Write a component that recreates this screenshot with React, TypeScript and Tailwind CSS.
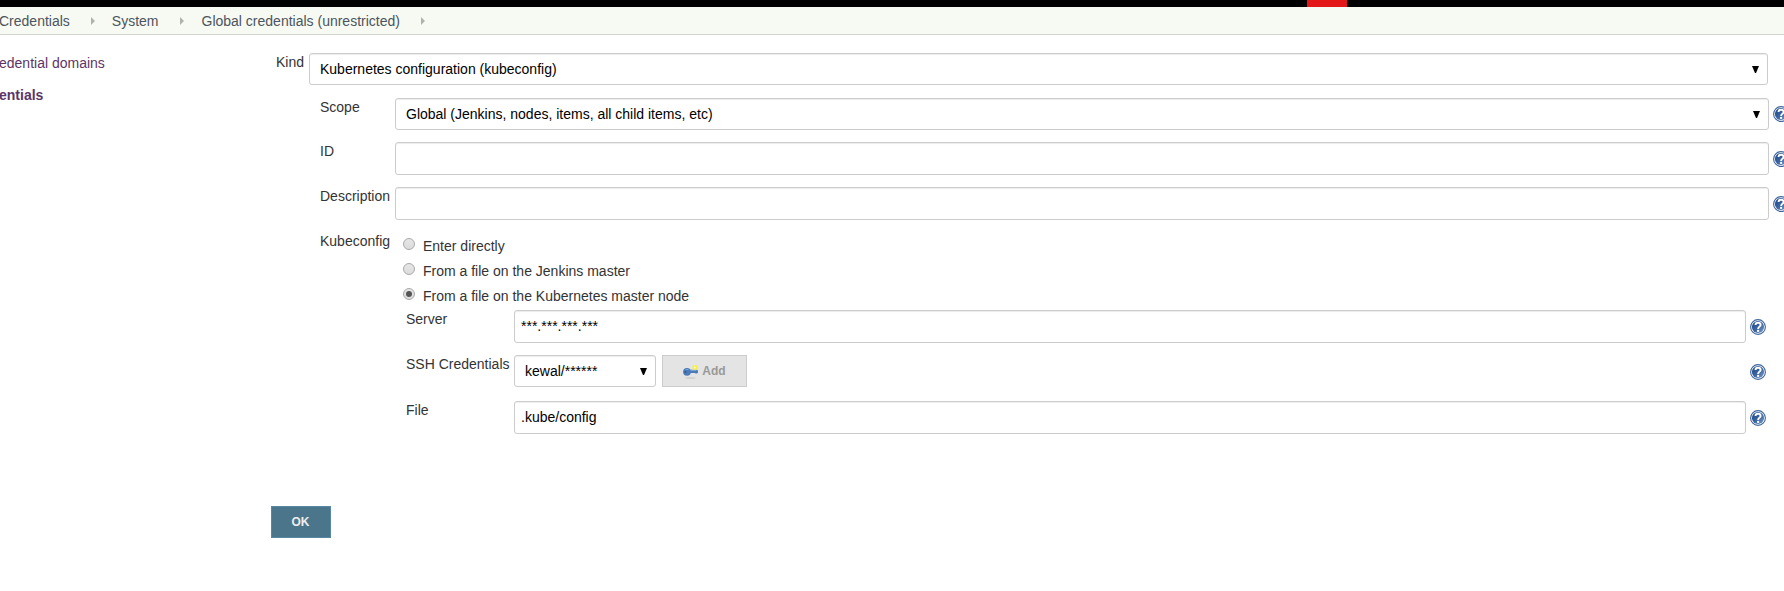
import type { ReactNode } from "react";

function HelpIcon() {
  return (
    <svg width="16" height="16" viewBox="0 0 16 16" className="block shrink-0" aria-label="Help">
      <defs>
        <linearGradient id="helpFill" x1="0" y1="0" x2="1" y2="1">
          <stop offset="0" stopColor="#1c4587" />
          <stop offset="0.5" stopColor="#3a64a0" />
          <stop offset="1" stopColor="#7d9cc6" />
        </linearGradient>
      </defs>
      <circle cx="8" cy="8" r="7.4" fill="#fff" stroke="#3c649c" strokeWidth="1.1" />
      <circle cx="8" cy="8" r="6.1" fill="url(#helpFill)" />
      <path d="M5.5 5.9C5.5 3 10.6 3 10.6 5.9C10.6 7.6 8.1 7.7 8.1 9.9" fill="none" stroke="#fff" strokeWidth="1.9" />
      <rect x="7.1" y="10.9" width="2" height="2" fill="#fff" />
    </svg>
  );
}

function KeyIcon() {
  return (
    <svg width="16" height="16" viewBox="0 0 16 16" className="block shrink-0">
      <ellipse cx="7.5" cy="15" rx="5.5" ry="0.7" fill="#cacaca" />
      <ellipse cx="4" cy="8.8" rx="3.9" ry="3.9" fill="#4a7ab8" />
      <path d="M6.5 6.8H14L15 7.8V9.4L14 10.4H12.6L11.8 10H7Z" fill="#4a7ab8" />
      <path d="M2.5 6.5H5.5M7.5 7.5H13.4" stroke="#7fa6d6" strokeWidth="0.9" />
      <circle cx="2.5" cy="8.9" r="0.9" fill="#2c548c" />
      <rect x="9.6" y="2.2" width="4.6" height="4.6" rx="1.4" fill="#f7f03c" />
      <circle cx="11.9" cy="4.5" r="1" fill="#fffcc0" />
    </svg>
  );
}

function Caret() {
  return (
    <svg width="7" height="7" viewBox="0 0 7 7" className="block shrink-0">
      <path d="M0 0H7L4 7H3Z" fill="#000" />
    </svg>
  );
}

function Crumb({ children, arrow }: { children: ReactNode; arrow: string }) {
  return (
    <>
      <span>{children}</span>
      <svg width="4" height="8" viewBox="0 0 4 8" className={`mt-px block shrink-0 ${arrow}`}>
        <path d="M0 0L4 4L0 8Z" fill="#b0b3ad" />
      </svg>
    </>
  );
}

function Select({ children, className = "" }: { children: ReactNode; className?: string }) {
  return (
    <div className={`flex h-8 items-center justify-between rounded-[3px] border border-[#ccc] bg-white pr-[8px] pl-[10px] text-black shadow-[inset_0_1px_1px_rgba(0,0,0,0.075)] ${className}`}>
      <span>{children}</span>
      <Caret />
    </div>
  );
}

function Field({ children }: { children?: ReactNode }) {
  return (
    <div className="flex h-[33px] flex-1 items-center rounded-[3px] border border-[#ccc] bg-white px-[6px] pb-px text-black shadow-[inset_0_1px_1px_rgba(0,0,0,0.075)]">
      {children}
    </div>
  );
}

function Row({ label, labelClass, children, className = "" }: { label: string; labelClass: string; children: ReactNode; className?: string }) {
  return (
    <div className={`flex items-start ${className}`}>
      <div className={`shrink-0 pt-px ${labelClass}`}>{label}</div>
      {children}
    </div>
  );
}

function Radio({ label, checked = false }: { label: string; checked?: boolean }) {
  return (
    <div className="flex h-[25px] items-start">
      <span className="mt-[4px] flex size-3 items-center justify-center rounded-full border border-[#a9a9a9] bg-linear-to-b from-[#e6e6e6] to-[#dcdcdc]">
        {checked && <span className="size-[6px] rounded-full bg-[#555]" />}
      </span>
      <span className="ml-2 pt-[4px]">{label}</span>
    </div>
  );
}

export default function App() {
  return (
    <div className="flex h-[591px] w-[1784px] flex-col overflow-hidden bg-white font-['Liberation_Sans',Arial,sans-serif] text-[14px] leading-4 text-[#333]">
      <header className="flex h-[7px] shrink-0 bg-black pl-[1307px]">
        <div className="w-10 bg-[#e31717]" />
      </header>
      <nav className="flex h-7 shrink-0 items-center border-b border-[#d3d7cf] bg-[#f6faf2] text-[#4d545d]">
        <Crumb arrow="ml-[21px] mr-[17px]">
          <span className="-ml-px">Credentials</span>
        </Crumb>
        <Crumb arrow="ml-[21px] mr-[18px]">System</Crumb>
        <Crumb arrow="ml-[21px]">Global credentials (unrestricted)</Crumb>
      </nav>
      <div className="flex flex-1 pt-[18px]">
        <aside className="-ml-px flex w-[272px] shrink-0 flex-col gap-4 pt-[2px] text-[#5c3566]">
          <a>edential domains</a>
          <a className="font-bold">entials</a>
        </aside>
        <main className="flex w-[1513px] flex-col">
          <Row label="Kind" labelClass="w-[38px] pl-[5px]">
            <Select className="w-[1459px]">Kubernetes configuration (kubeconfig)</Select>
          </Row>
          <div className="mt-[13px] flex flex-col pl-[49px]">
            <Row label="Scope" labelClass="w-[75px]" className="h-11">
              <Select className="flex-1">Global (Jenkins, nodes, items, all child items, etc)</Select>
              <div className="mt-2 ml-1 w-[11px] overflow-hidden"><HelpIcon /></div>
            </Row>
            <Row label="ID" labelClass="w-[75px]" className="h-[45px]">
              <Field />
              <div className="mt-[9px] ml-1 w-[11px] overflow-hidden"><HelpIcon /></div>
            </Row>
            <Row label="Description" labelClass="w-[75px]" className="h-[45px]">
              <Field />
              <div className="mt-[9px] ml-1 w-[11px] overflow-hidden"><HelpIcon /></div>
            </Row>
            <Row label="Kubeconfig" labelClass="w-[83px]">
              <div className="flex h-[78px] flex-col pt-[2px]">
                <Radio label="Enter directly" />
                <Radio label="From a file on the Jenkins master" />
                <Radio label="From a file on the Kubernetes master node" checked />
              </div>
            </Row>
            <div className="flex flex-col pr-[18px] pl-[86px]">
              <Row label="Server" labelClass="w-[108px]" className="h-[45px]">
                <Field>***.***.***.***</Field>
                <div className="mt-[9px] ml-1"><HelpIcon /></div>
              </Row>
              <Row label="SSH Credentials" labelClass="w-[108px]" className="h-[46px]">
                <Select className="w-[142px]">kewal/******</Select>
                <button className="ml-[6px] flex h-8 w-[85px] items-center justify-center gap-[3px] border border-[#ccc] bg-[#e4e4e4] text-[12px] font-bold text-[#999]">
                  <KeyIcon />
                  Add
                </button>
                <div className="mt-[9px] ml-auto"><HelpIcon /></div>
              </Row>
              <Row label="File" labelClass="w-[108px]">
                <Field>.kube/config</Field>
                <div className="mt-[9px] ml-1"><HelpIcon /></div>
              </Row>
            </div>
          </div>
          <button className="mt-[72px] h-8 w-[60px] border border-[#5788a1] bg-[#4b758b] pr-px text-[12px] font-bold text-[#eee]">
            OK
          </button>
        </main>
      </div>
    </div>
  );
}
